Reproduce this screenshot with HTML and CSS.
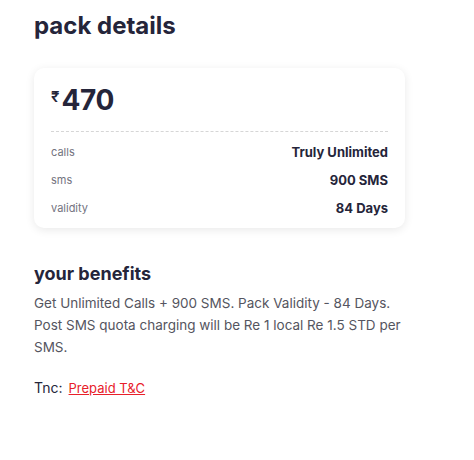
FILE: index.html
```html
<!DOCTYPE html>
<html>
<head>
<meta charset="utf-8">
<link rel="stylesheet" href="styles.css">
</head>
<body>
<div class="page">
  <h1 class="title">pack details</h1>
  <div class="card">
    <div class="price"><span class="rupee">₹</span><span class="amount">470</span></div>
    <div class="divider"></div>
    <div class="row"><span class="label">calls</span><span class="value">Truly Unlimited</span></div>
    <div class="row"><span class="label">sms</span><span class="value">900 SMS</span></div>
    <div class="row"><span class="label">validity</span><span class="value">84 Days</span></div>
  </div>
  <h2 class="subtitle">your benefits</h2>
  <p class="desc">Get Unlimited Calls + 900 SMS. Pack Validity - 84 Days. Post SMS quota charging will be Re 1 local Re 1.5 STD per SMS.</p>
  <div class="tnc"><span class="tnc-label">Tnc:</span><a class="tnc-link" href="#">Prepaid T&amp;C</a></div>
</div>
</body>
</html>
```
FILE: styles.css
```css
* { box-sizing: border-box; }
html, body { margin: 0; padding: 0; background: #fff; }
body { font-family: Inter, "Noto Sans", sans-serif; color: #25253a; }
.page { padding: 10px 0 0 34px; width: 405px; }
.title { margin: 0; font-size: 24px; font-weight: 700; line-height: 32px; letter-spacing: 0; color: #25253a; }
.card {
  margin-top: 26px;
  background: #fff;
  border-radius: 10px;
  box-shadow: 0 2px 10px rgba(0,0,0,0.09);
  padding: 16px 17px 6px 17px;
}
.price { display: flex; align-items: flex-start; height: 34px; }
.rupee { font-size: 15px; font-weight: 600; margin-top: 3px; margin-right: 2px; }
.amount { font-size: 28px; font-weight: 700; line-height: 32px; letter-spacing: -0.3px; }
.divider { margin-top: 13px; border-top: 1px dashed #d6d6d6; margin-bottom: 6px; }
.row { display: flex; justify-content: space-between; align-items: center; height: 28px; }
.label { font-size: 11px; color: #737380; }
.value { font-size: 13px; font-weight: 700; color: #25253a; }
.subtitle { margin: 34px 0 0 0; font-size: 18px; font-weight: 700; line-height: 24px; color: #25253a; }
.desc { margin: 6px 0 0 0; font-size: 13.5px; line-height: 22px; color: #555560; width: 370px; }
.tnc { margin-top: 20px; font-size: 14px; line-height: 20px; }
.tnc-label { color: #25253a; margin-right: 6px; }
.tnc-link { color: #e8202a; font-size: 13px; text-decoration: underline; }
```
